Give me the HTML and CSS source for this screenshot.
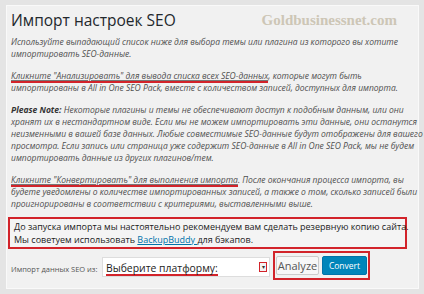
FILE: index.html
```html
<!DOCTYPE html>
<html lang="ru">
<head>
    <meta charset="UTF-8">
    <meta name="viewport" content="width=device-width, initial-scale=1.0">
    <title>Импорт настроек SEO</title>
    <link rel="stylesheet" href="styles.css">
</head>
<body>
    <div class="card">
        <div class="head">
            <h1>Импорт настроек SEO</h1>
            <span class="watermark">Goldbusinessnet.com</span>
        </div>

        <p class="desc">Используйте выпадающий список ниже для выбора темы или плагина из которого вы хотите<br>импортировать SEO-данные.</p>

        <p class="desc"><span class="mark"><u>Кликните "Анализировать" для вывода списка всех SEO-данных</u></span>, которые могут быть<br>импортированы в All in One SEO Pack, вместе с количеством записей, доступных для импорта.</p>

        <p class="desc"><b>Please Note:</b> Некоторые плагины и темы не обеспечивают доступ к подобным данным, или они<br>хранят их в нестандартном виде. Если мы не можем импортировать эти данные, они останутся<br>неизменными в вашей базе данных. Любые совместимые SEO-данные будут отображены для вашего<br>просмотра. Если запись или страница уже содержит SEO-данные в All in One SEO Pack, мы не будем<br>импортировать данные из других плагинов/тем.</p>

        <p class="desc"><span class="mark"><u>Кликните "Конвертировать" для выполнения импорта</u></span>. После окончания процесса импорта, вы<br>будете уведомлены о количестве импортированных записей, а также о том, сколько записей были<br>проигнорированы в соответствии с критериями, выставленными выше.</p>

        <div class="notice">
            <p>До запуска импорта мы настоятельно рекомендуем вам сделать резервную копию сайта.<br>Мы советуем использовать <a href="#">BackupBuddy </a>для бэкапов.</p>
        </div>

        <div class="import-row">
            <span class="label">Импорт данных SEO из:</span>
            <div class="select">
                <span class="select-text">Выберите платформу:</span>
                <span class="arrow">&#9662;</span>
            </div>
            <div class="buttons">
                <button class="btn">Analyze</button>
                <button class="btn primary">Convert</button>
            </div>
        </div>
    </div>
</body>
</html>
```

FILE: styles.css
```css
body {
    background-color: #e4e4e4;
    color: #4f4f4f;
    font-family: "Open Sans", sans-serif;
    margin: 0;
    padding: 5px 5px 0 6px;
}

.card {
    background-color: #f1f1f1;
    border: 1px solid #f9f9f9;
    padding: 0 4px;
    height: 284px;
    box-sizing: border-box;
}

.head {
    display: flex;
    justify-content: space-between;
    align-items: center;
    height: 22px;
    margin-top: 3px;
}

.head h1 {
    margin: 0;
    font-size: 15.5px;
    font-weight: 400;
    line-height: 22px;
    color: #23282d;
}

.watermark {
    font-family: "Liberation Serif", serif;
    font-weight: bold;
    font-size: 15px;
    color: #cdc6b6;
    margin-right: 17px;
}

.desc {
    font-style: italic;
    font-size: 8.5px;
    line-height: 12px;
    margin: 10px 0 0 0;
    white-space: nowrap;
}

.head + .desc {
    margin-top: 5px;
}

.desc b {
    color: #333;
}

.desc u {
    text-decoration-color: #777;
}

.mark {
    border-bottom: 2px solid #d2232a;
}

.notice {
    margin: 7px 7px 0 -3px;
    border: 2px solid #d2232a;
    background-color: #f4f4f4;
    padding: 1px 4px;
}

.notice p {
    margin: 0;
    font-size: 9px;
    line-height: 13px;
    color: #222;
    white-space: nowrap;
}

.notice a {
    color: #0073aa;
}

.import-row {
    display: flex;
    align-items: flex-end;
    margin-top: 2px;
}

.label {
    font-size: 7.5px;
    color: #555;
    width: 91px;
    white-space: nowrap;
    margin-bottom: 6px;
}

.select {
    display: flex;
    align-items: center;
    justify-content: space-between;
    width: 168px;
    height: 20px;
    box-sizing: border-box;
    background-color: #fff;
    border: 1px solid #ddd;
    padding: 0 2px 0 3px;
    margin-bottom: 3px;
}

.select-text {
    font-size: 10.4px;
    color: #222;
    border-bottom: 2px solid #d2232a;
    line-height: 12px;
    margin-top: 3px;
}

.arrow {
    font-size: 6px;
    line-height: 8px;
    width: 6px;
    text-align: center;
    color: #333;
    border: 1px solid #d2232a;
    background-color: #f3f3f3;
}

.buttons {
    display: flex;
    gap: 3px;
    margin-left: 3px;
    padding: 3px 1px;
    border: 2px solid #d2232a;
}

.btn {
    font-family: "Open Sans", sans-serif;
    font-size: 11px;
    height: 19px;
    padding: 0;
    width: 43px;
    color: #555;
    background-color: #f7f7f7;
    border: 1px solid #ccc;
    border-radius: 2px;
    line-height: 15px;
}

.btn.primary {
    background-color: #0085ba;
    border-color: #0073aa;
    color: #fff;
    font-size: 8.5px;
    width: 45px;
}
```
